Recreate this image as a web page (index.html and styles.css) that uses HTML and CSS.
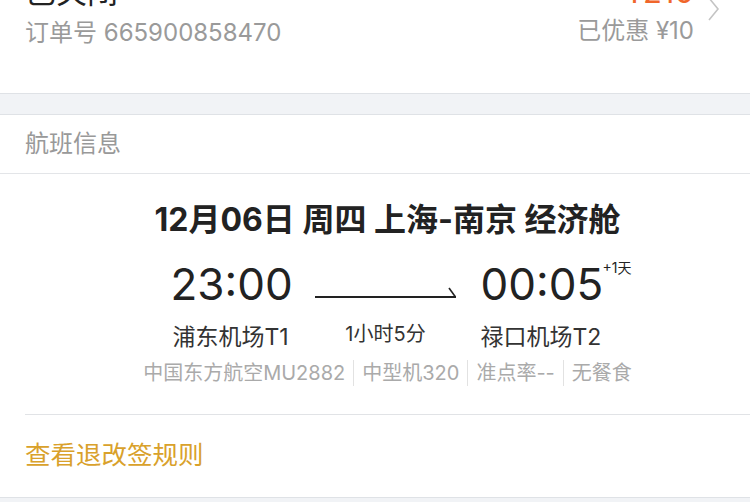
FILE: index.html
```html
<!DOCTYPE html>
<html lang="zh-CN">
<head>
  <meta charset="UTF-8">
  <title>订单详情</title>
  <link rel="stylesheet" href="styles.css">
</head>
<body>
  <div class="order-card">
    <div class="order-head">
      <div class="order-left">
        <div class="order-status">已关闭</div>
        <div class="order-no">订单号 665900858470</div>
      </div>
      <div class="order-right">
        <div class="order-price">¥210</div>
        <div class="order-discount">已优惠 ¥10</div>
      </div>
      <svg class="chevron" width="12" height="24" viewBox="0 0 12 24">
        <polyline points="1,-2 10,9 1,20" fill="none" stroke="#c4c4c4" stroke-width="1.6"/>
      </svg>
    </div>
  </div>

  <div class="gap"></div>

  <div class="flight-card">
    <div class="section-title">航班信息</div>
    <div class="flight-body">
      <div class="flight-date">12月06日 周四 上海-南京 经济舱</div>
      <div class="flight-grid">
        <div class="time">23:00</div>
        <div class="arrow">
          <svg width="142" height="14" viewBox="0 0 142 14">
            <line x1="0" y1="12" x2="141" y2="12" stroke="#222" stroke-width="2"/>
            <line x1="140.5" y1="12" x2="134" y2="3" stroke="#222" stroke-width="1.6"/>
          </svg>
        </div>
        <div class="time arrive">00:05<span class="plus-day">+1天</span></div>
        <div class="airport">浦东机场T1</div>
        <div class="duration">1小时5分</div>
        <div class="airport">禄口机场T2</div>
      </div>
      <div class="flight-info">
        <span>中国东方航空MU2882</span>
        <span>中型机320</span>
        <span>准点率--</span>
        <span>无餐食</span>
      </div>
    </div>
    <div class="rules">
      <a class="rules-link" href="#">查看退改签规则</a>
    </div>
  </div>
</body>
</html>
```

FILE: styles.css
```css
* {
  margin: 0;
  padding: 0;
  box-sizing: border-box;
}

body {
  background: #f1f3f6;
  font-family: Inter, "Noto Sans CJK SC", sans-serif;
  overflow: hidden;
}

.order-card {
  background: #fff;
  height: 94px;
  border-bottom: 1px solid #dfe2e6;
  overflow: hidden;
}

.order-head {
  display: flex;
  align-items: flex-start;
  padding: 0 30px 0 25px;
  margin-top: -26px;
}

.order-left {
  flex: 1;
}

.order-status {
  font-size: 31px;
  line-height: 36px;
  color: #222;
}

.order-no {
  margin-top: 10px;
  font-size: 24px;
  line-height: 26px;
  color: #9a9a9a;
}

.order-right {
  text-align: right;
}

.order-price {
  font-size: 31px;
  line-height: 36px;
  color: #f0662b;
}

.order-discount {
  margin-top: 8px;
  font-size: 24px;
  line-height: 26px;
  color: #9a9a9a;
}

.chevron {
  margin-left: 14px;
  margin-top: 26px;
}

.gap {
  height: 20px;
}

.flight-card {
  background: #fff;
  border-top: 1px solid #dfe2e6;
  border-bottom: 1px solid #dfe2e6;
}

.section-title {
  height: 59px;
  line-height: 58px;
  padding-left: 25px;
  font-size: 24px;
  color: #999;
  border-bottom: 1px solid #e3e5e8;
}

.flight-body {
  margin-left: 25px;
  padding: 29px 0 28px;
  border-bottom: 1px solid #e1e3e6;
  text-align: center;
}

.flight-date {
  font-size: 32px;
  font-weight: bold;
  line-height: 34px;
  color: #222;
}

.flight-grid {
  margin-top: 19px;
  display: grid;
  grid-template-columns: 120px 190px 124px;
  justify-content: center;
  align-items: start;
}

.time {
  font-size: 44px;
  line-height: 56px;
  color: #222;
}

.time.arrive {
  position: relative;
  text-align: left;
}

.plus-day {
  position: absolute;
  left: 122px;
  top: 4px;
  font-size: 14px;
  line-height: 16px;
  white-space: nowrap;
}

.arrow {
  padding-top: 29px;
}

.arrow svg {
  display: block;
  margin: 0 auto;
}

.airport {
  margin-top: 11px;
  font-size: 23px;
  line-height: 28px;
  color: #333;
}

.airport:last-child {
  text-align: left;
}

.duration {
  margin-top: 8px;
  font-size: 20px;
  line-height: 28px;
  color: #333;
}

.flight-info {
  margin-top: 9px;
  display: flex;
  justify-content: center;
  font-size: 20px;
  line-height: 26px;
  color: #aaa;
}

.flight-info span {
  padding: 0 8px;
  border-left: 1px solid #e2e2e2;
}

.flight-info span:first-child {
  border-left: none;
}

.rules {
  height: 82px;
  padding: 0 0 3px 25px;
  display: flex;
  align-items: center;
}

.rules-link {
  font-size: 25.5px;
  line-height: 32px;
  color: #d9a12b;
  text-decoration: none;
}
```
